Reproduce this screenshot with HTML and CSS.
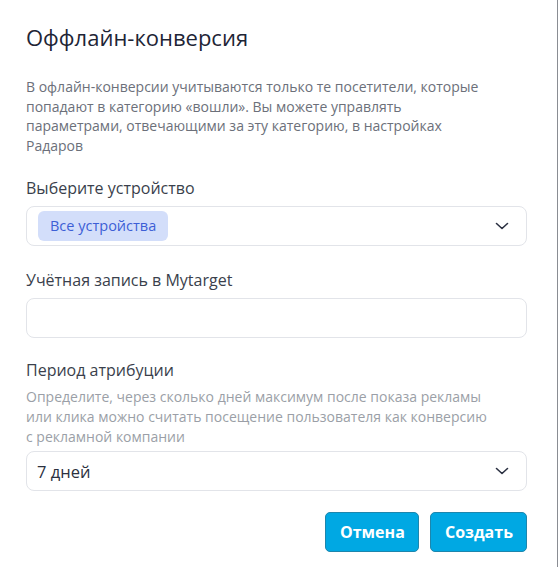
FILE: index.html
```html
<!DOCTYPE html>
<html lang="ru">
<head>
<meta charset="utf-8">
<link rel="stylesheet" href="styles.css">
</head>
<body>
<div class="dialog">
  <h1 class="title">Оффлайн-конверсия</h1>
  <p class="desc">В офлайн-конверсии учитываются только те посетители, которые попадают в категорию «вошли». Вы можете управлять параметрами, отвечающими за эту категорию, в настройках Радаров</p>

  <div class="field field-first">
    <div class="label">Выберите устройство</div>
    <div class="select">
      <span class="tag">Все устройства</span>
      <svg class="chev" width="14" height="8" viewBox="0 0 14 8"><path d="M1.5 1.5 L7 6.5 L12.5 1.5" fill="none" stroke="#2b3142" stroke-width="1.6" stroke-linecap="round" stroke-linejoin="round"/></svg>
    </div>
  </div>

  <div class="field">
    <div class="label">Учётная запись в Mytarget</div>
    <div class="input"></div>
  </div>

  <div class="field field-last">
    <div class="label">Период атрибуции</div>
    <div class="hint">Определите, через сколько дней максимум после показа рекламы или клика можно считать посещение пользователя как конверсию с рекламной компании</div>
    <div class="select select-text">
      <span class="value">7 дней</span>
      <svg class="chev" width="14" height="8" viewBox="0 0 14 8"><path d="M1.5 1.5 L7 6.5 L12.5 1.5" fill="none" stroke="#2b3142" stroke-width="1.6" stroke-linecap="round" stroke-linejoin="round"/></svg>
    </div>
  </div>

  <div class="actions">
    <button class="btn btn-cancel">Отмена</button>
    <button class="btn btn-create">Создать</button>
  </div>
</div>
</body>
</html>
```

FILE: styles.css
```css
* { box-sizing: border-box; }
html, body { margin: 0; padding: 0; background: #fff; }
body {
  font-family: "Open Sans", "Noto Sans", sans-serif;
  width: 559px;
  height: 567px;
  overflow: hidden;
}
.dialog {
  width: 558px;
  height: 567px;
  border-right: 1px solid #8a8d93;
  padding: 22px 30px 0 26px;
}
.title {
  margin: 0;
  font-size: 22px;
  line-height: 30px;
  font-weight: 400;
  color: #1e2536;
}
.desc {
  margin: 25px 0 0;
  max-width: 462px;
  font-size: 14px;
  line-height: 19.5px;
  color: #6c707a;
}
.field { margin-top: 23px; }
.field-first { margin-top: 22px; }
.field-last { margin-top: 21px; }
.label {
  font-size: 16px;
  line-height: 22px;
  color: #3a3f4c;
  margin-bottom: 7px;
}
.hint {
  max-width: 462px;
  font-size: 14px;
  line-height: 20px;
  color: #9b9fa7;
  margin-top: -1px;
  margin-bottom: 4px;
}
.select, .input {
  height: 40px;
  border: 1px solid #e2e4e9;
  border-radius: 8px;
  display: flex;
  align-items: center;
}
.select {
  justify-content: space-between;
  padding: 0 17px 0 11px;
}
.select-text { padding-left: 10px; }
.tag {
  background: #d3defa;
  color: #3d5fd6;
  font-size: 14.5px;
  line-height: 20px;
  padding: 5px 12px;
  border-radius: 6px;
}
.value {
  font-size: 16.5px;
  color: #2c3140;
}
.chev { display: block; }
.actions {
  display: flex;
  justify-content: flex-end;
  gap: 11px;
  margin-top: 21px;
}
.btn {
  height: 40px;
  border: 1px solid #1d86ad;
  background: #00a8e3;
  color: #fff;
  font-family: "Open Sans", "Noto Sans", sans-serif;
  font-weight: 700;
  font-size: 16px;
  border-radius: 5px;
  padding: 0 14px;
}
.btn-cancel { width: 94px; }
.btn-create { width: 97px; }
```
